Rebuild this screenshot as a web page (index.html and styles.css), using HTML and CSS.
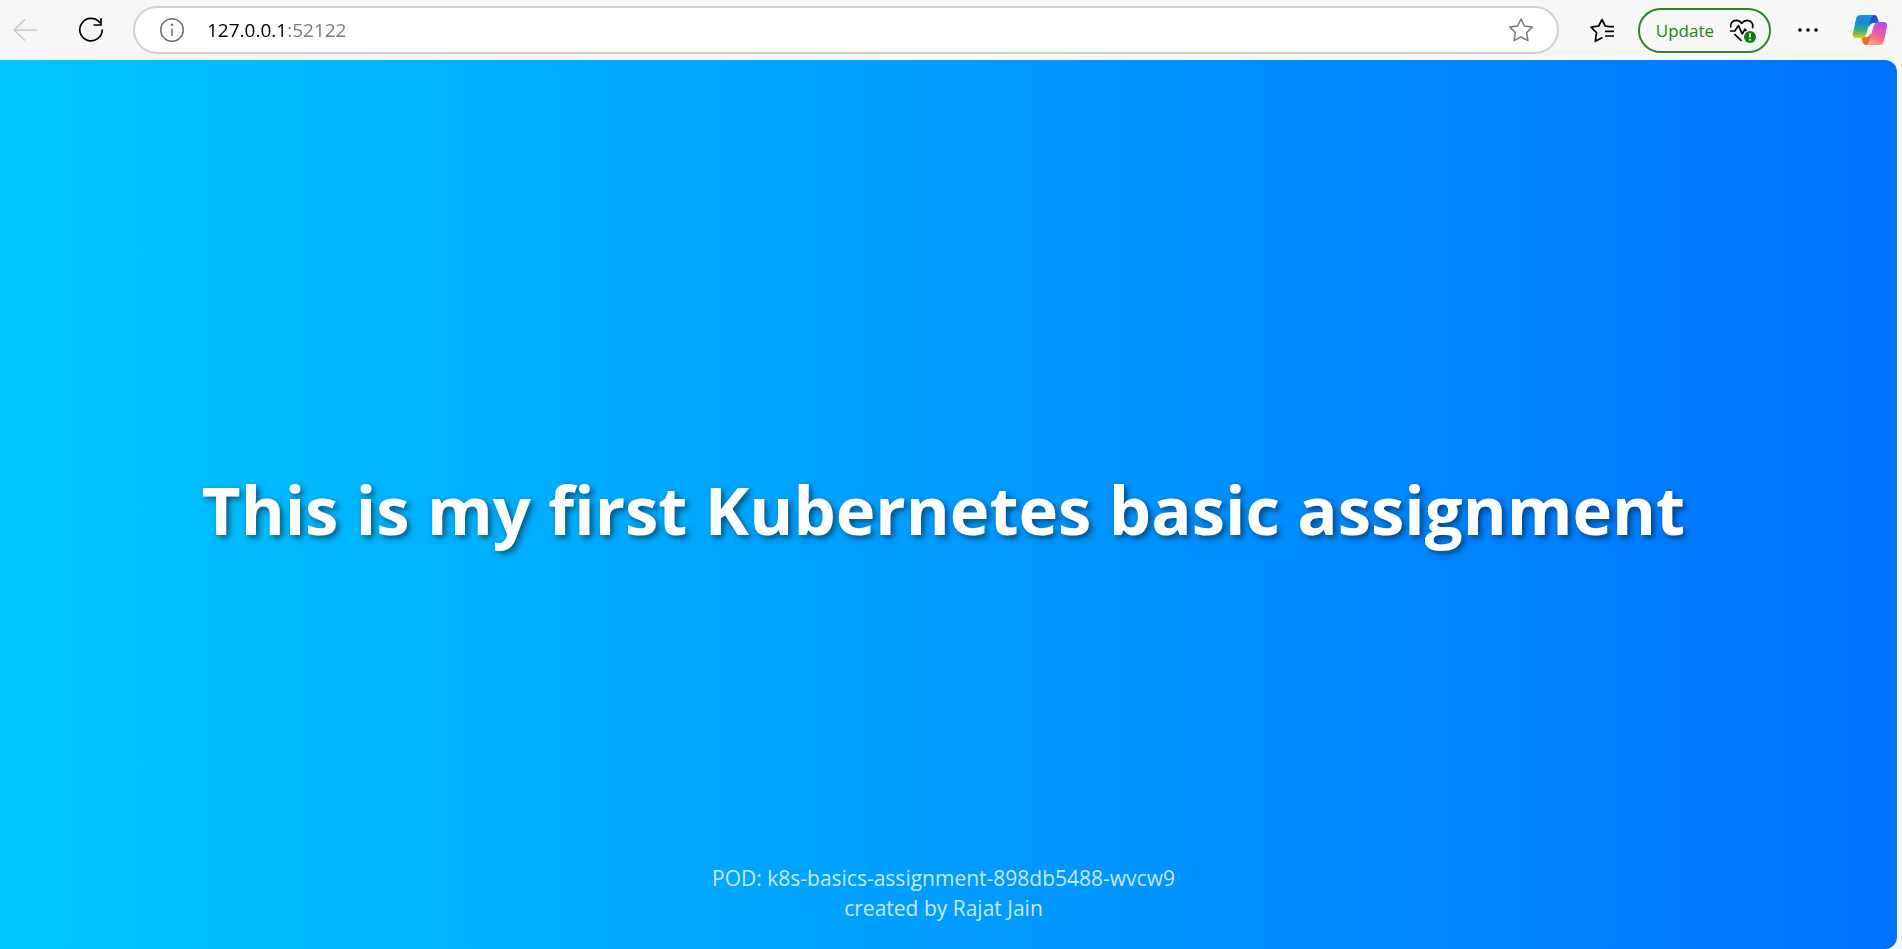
FILE: index.html
```html
<!DOCTYPE html>
<html lang="en">
<head>
<meta charset="utf-8">
<title>127.0.0.1:52122</title>
<link rel="stylesheet" href="styles.css">
</head>
<body>
<header class="toolbar">
  <button class="tool back" type="button" aria-label="Back" disabled>
    <svg width="26" height="24" viewBox="0 0 26 24" fill="none" stroke="#c6c6c6" stroke-width="1.5"><path d="M25 12H2M13 1.5L2 12L13 22.5"/></svg>
  </button>
  <button class="tool reload" type="button" aria-label="Refresh">
    <svg width="26" height="26" viewBox="0 0 26 26" fill="none" stroke="#000" stroke-width="1.7"><path d="M22 6A11.2 11.2 0 1 0 24.2 12.5M23 1.2V8H15.5"/></svg>
  </button>
  <div class="address">
    <button class="tool" type="button" aria-label="Site information">
      <svg width="26" height="26" viewBox="0 0 26 26" fill="none" stroke="#707070" stroke-width="1.5"><circle cx="13" cy="13" r="11.3"/><path d="M13 11.5V19"/><circle cx="13" cy="7.8" r="1.2" fill="#707070" stroke="none"/></svg>
    </button>
    <input class="url" type="text" value="127.0.0.1:52122" aria-label="Address">
    <button class="tool" type="button" aria-label="Add to favorites">
      <svg width="26" height="26" viewBox="0 0 26 26" fill="none" stroke="#767676" stroke-width="1.5" stroke-linejoin="round"><path d="M13 2L16.4 9L24.2 10.1L18.6 15.5L19.9 23.6L13 19.9L6.1 23.6L7.4 15.5L1.8 10.1L9.6 9Z"/></svg>
    </button>
  </div>
  <button class="tool favorites" type="button" aria-label="Favorites">
    <svg width="26" height="26" viewBox="0 0 26 26" fill="none" stroke="#000" stroke-width="1.7" stroke-linejoin="round"><path d="M20 9.6L16.2 9L13 2.5L9.7 9L2 10.2L7.5 15.6L6.3 24.3L13.5 20.6M20 9.6H25"/><path d="M16 14.3H25M16 19H25"/></svg>
  </button>
  <button class="update" type="button">
    <span>Update</span>
    <svg width="28" height="26" viewBox="0 0 28 26" fill="none" stroke="#000" stroke-width="1.7" stroke-linejoin="round"><path d="M1.8 10.5C.8 6 4 3.3 7.3 3.3C10 3.3 11.5 4.6 12.7 6.2C14 4.6 15.5 3.3 18 3.3C22 3.3 24.8 6.5 23.6 11.2M1 14H5.8L9.4 8.6L13.3 16.8L16 12.2L17.4 14M5.3 17L12.6 23.8"/><circle cx="21" cy="20" r="6" fill="#107c10" stroke="none"/><path d="M21 16.2V20.6M21 22.1V23.7" stroke="#fff"/></svg>
  </button>
  <button class="tool more" type="button" aria-label="Settings and more">
    <svg width="22" height="6" viewBox="0 0 22 6" fill="#000"><circle cx="3" cy="3" r="1.8"/><circle cx="11" cy="3" r="1.8"/><circle cx="19" cy="3" r="1.8"/></svg>
  </button>
  <button class="tool copilot" type="button" aria-label="Copilot">
    <svg width="36" height="32" viewBox="0 0 36 32">
      <defs>
        <linearGradient id="cool" x1="0" y1="0" x2="0" y2="1"><stop offset="0" stop-color="#168fe8"/><stop offset=".35" stop-color="#1789cf"/><stop offset=".7" stop-color="#46b56c"/><stop offset="1" stop-color="#e5cb16"/></linearGradient>
        <linearGradient id="warm" x1=".7" y1="0" x2=".3" y2="1"><stop offset="0" stop-color="#a852e8"/><stop offset=".5" stop-color="#ee5c9d"/><stop offset="1" stop-color="#ffa36b"/></linearGradient>
        <linearGradient id="fold" x1="0" y1="0" x2="1" y2="1"><stop offset="0" stop-color="#123db5"/><stop offset="1" stop-color="#2368ef"/></linearGradient>
        <linearGradient id="tail" x1="0" y1="0" x2="1" y2="1"><stop offset="0" stop-color="#f59b25"/><stop offset="1" stop-color="#e44739"/></linearGradient>
      </defs>
      <path d="M17 1H22C24.2 1 25.2 2.4 25.8 4.5L27 9H22C19.3 9 18 10.3 17.3 12.5L14 10Z" fill="url(#fold)"/>
      <path d="M9 23H14C16.4 23 17.7 21.5 18.4 19.4L21 22L18 31H14.3C12.1 31 11 29.8 10.4 27.6Z" fill="url(#tail)"/>
      <path d="M9 1H23C20.8 1 19.6 2.6 18.7 5.5L14.5 19.5C13.4 22.6 12 24 9 24H4.5C1.5 24 .6 22 1 19L4 5C4.8 2 6.4 1 9 1Z" fill="url(#cool)"/>
      <path d="M27 31H13C15.2 31 16.4 29.4 17.3 26.5L21.5 12.5C22.6 9.4 24 8 27 8H31.5C34.5 8 35.4 10 35 13L32 27C31.2 30 29.6 31 27 31Z" fill="url(#warm)"/>
    </svg>
  </button>
</header>
<main class="page">
  <h1 class="title">This is my first Kubernetes basic assignment</h1>
  <footer class="credits">
    <p>POD: k8s-basics-assignment-898db5488-wvcw9</p>
    <p>created by Rajat Jain</p>
  </footer>
</main>
</body>
</html>
```
FILE: styles.css
```css
* {
  box-sizing: border-box;
}

body {
  display: flex;
  flex-direction: column;
  min-height: 100vh;
  margin: 0;
  background: #f7f7f7;
  font-family: "Open Sans", "Noto Sans", sans-serif;
}

svg {
  display: block;
  flex: none;
}

button {
  padding: 0;
  border: 0;
  background: none;
  font: inherit;
}

.toolbar {
  display: flex;
  align-items: center;
  height: 60px;
  padding: 0 14px 0 12px;
}

.reload {
  margin: 0 29px 0 40px;
}

.address {
  display: flex;
  flex: 1;
  align-items: center;
  gap: 22px;
  height: 48px;
  padding: 0 23px 0 24px;
  border: 2px solid #d1d1d1;
  border-radius: 24px;
  background: #fff;
}

.url {
  flex: 1;
  min-width: 0;
  padding: 0;
  border: 0;
  outline: 0;
  background: linear-gradient(to right, #000 79px, #767676 79px);
  background-clip: text;
  color: transparent;
  caret-color: #000;
  font: 19px/28px "Open Sans", "Noto Sans", sans-serif;
}

.favorites {
  margin: 0 23px 0 30px;
}

.update {
  display: flex;
  align-items: center;
  gap: 15px;
  height: 45px;
  padding: 0 12px 0 16px;
  border: 2px solid #2b862b;
  border-radius: 23px;
  color: #218021;
  font-size: 17px;
}

.more {
  margin: 0 33px 0 26px;
}

.page {
  display: flex;
  flex: 1;
  flex-direction: column;
  margin-right: 5px;
  padding: 0 10px 26px 0;
  border-radius: 0 12px 12px 0;
  background: linear-gradient(to right, #00c6ff, #0072ff);
  text-align: center;
}

.title {
  margin: auto;
  padding-top: 94px;
  color: #fff;
  font-size: 67px;
  line-height: 96px;
  text-shadow: 3px 3px 6px rgba(0, 0, 0, 0.5);
}

.credits {
  color: rgba(255, 255, 255, 0.8);
  font-size: 21px;
  line-height: 30px;
}

.credits p {
  margin: 0;
}
```
